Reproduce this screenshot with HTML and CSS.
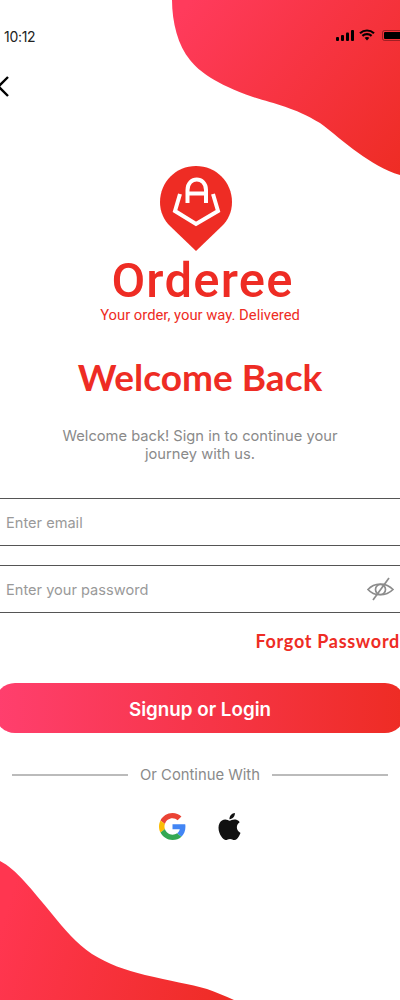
FILE: index.html
```html
<!DOCTYPE html>
<html lang="en">
<head>
    <title>Orderee - Welcome Back</title>
    <link rel="stylesheet" href="styles.css">
</head>
<body>
    <div id="screen">
        <!-- Background blobs -->
        <svg class="blob blob-top" width="228" height="176" viewBox="172 0 228 176">
            <defs>
                <linearGradient id="blobTop" gradientUnits="userSpaceOnUse" x1="190" y1="0" x2="400" y2="175">
                    <stop offset="0" stop-color="#FF3B5C"/>
                    <stop offset="1" stop-color="#EE2C24"/>
                </linearGradient>
            </defs>
            <path fill="url(#blobTop)" d="M172 0C172 22 178 46 190 60C200 72 214 83 253 97C275 104 293 107 320 123C345 142 370 166 400 175V0Z"/>
        </svg>
        <svg class="blob blob-bottom" width="234" height="140" viewBox="0 860 234 140">
            <defs>
                <linearGradient id="blobBottom" gradientUnits="userSpaceOnUse" x1="0" y1="930" x2="234" y2="1000">
                    <stop offset="0" stop-color="#FF3650"/>
                    <stop offset="1" stop-color="#EE2C24"/>
                </linearGradient>
            </defs>
            <path fill="url(#blobBottom)" d="M0 861C8 865 16 872 24 881C34 892 42 902 52 914C64 929 76 943 92 954C108 964 125 970 145 975C170 981 190 984 207 989C216 992 225 996 234 1000H0Z"/>
        </svg>

        <div class="status-bar">
            <span class="time">10:12</span>
            <div class="status-icons">
                <svg width="18" height="11" viewBox="0 0 18 11">
                    <rect x="0" y="7" width="3" height="4" rx="1"/>
                    <rect x="5" y="5" width="3" height="6" rx="1"/>
                    <rect x="10" y="2.500" width="3" height="8.500" rx="1"/>
                    <rect x="15" y="0" width="3" height="11" rx="1"/>
                </svg>
                <svg width="16" height="12" viewBox="0 0 16 12">
                    <path d="M1 4.200C5 .6 11 .6 15 4.200M3.400 6.800C6 4.600 10 4.600 12.600 6.800" fill="none" stroke="#000" stroke-width="2.200"/>
                    <path d="M5.600 8.800C7 7.700 9 7.700 10.400 8.800L8 11.600Z"/>
                </svg>
                <svg class="battery" width="18" height="11" viewBox="0 0 18 11">
                    <rect x=".5" y=".5" width="20" height="10" rx="2" fill="none" stroke="#000" stroke-opacity=".35"/>
                    <rect x="2" y="2" width="20" height="7" rx="1"/>
                </svg>
            </div>
        </div>

        <svg class="back" width="9" height="21" viewBox="0 0 9 21">
            <path d="M8 1L-1.500 10.500L8 20" fill="none" stroke="#000" stroke-width="2.400"/>
        </svg>

        <div class="logo">
            <svg width="72" height="85" viewBox="0 0 72 85">
                <path fill="#EE2C24" d="M36 0C56 0 72 16 72 36C72 46 68 54 62 60L36 85L10 60C4 54 0 46 0 36C0 16 16 0 36 0Z"/>
                <g fill="none" stroke="#fff" stroke-width="4">
                    <path d="M20 28L15 45L36 58L58 45L53 28"/>
                    <path d="M27.500 37V24C27.500 10 46 10 46 24V37M27.500 27.500H46"/>
                </g>
            </svg>
            <div class="brand">Orderee</div>
            <div class="tagline">Your order, your way. Delivered</div>
        </div>

        <h1>Welcome Back</h1>
        <p class="intro">Welcome back! Sign in to continue your journey with us.</p>

        <form>
            <div class="field">
                <input type="text" placeholder="Enter email">
            </div>
            <div class="field">
                <input type="password" placeholder="Enter your password">
                <!-- eye with slash -->
                <svg width="27" height="24" viewBox="0 0 27 24" fill="none" stroke="#8c8c8c" stroke-width="1.700">
                    <path d="M1 12.500C7 5.500 19 5 26 12.500C19 19.500 7 19.500 1 12.500Z"/>
                    <circle cx="13.500" cy="12.500" r="5"/>
                    <path d="M22 1L6 23"/>
                </svg>
            </div>
            <a class="forgot">Forgot Password</a>
            <button type="button">Signup or Login</button>
        </form>

        <div class="divider">
            <span class="line"></span>
            <span>Or Continue With</span>
            <span class="line"></span>
        </div>

        <div class="social">
            <svg width="27" height="27" viewBox="0 0 48 48">
                <path fill="#EA4335" d="M24 9.500c3.500 0 6.700 1.300 9.100 3.500l6.800-6.800C35.800 2.400 30.200 0 24 0 14.600 0 6.500 5.400 2.600 13.200l7.900 6.200C12.400 13.600 17.700 9.500 24 9.500z"/>
                <path fill="#4285F4" d="M47 24.500c0-1.600-.1-3.100-.4-4.500H24v9h12.900c-.6 3-2.200 5.500-4.800 7.200l7.700 6C44.300 38 47 31.800 47 24.500z"/>
                <path fill="#FBBC05" d="M10.500 28.600c-.5-1.400-.8-3-.8-4.600s.3-3.200.8-4.600l-7.900-6.200C.9 16.500 0 20.100 0 24s.9 7.500 2.600 10.800l7.900-6.200z"/>
                <path fill="#34A853" d="M24 48c6.500 0 11.900-2.100 15.800-5.800l-7.700-6c-2.100 1.400-4.900 2.300-8.100 2.300-6.300 0-11.600-4.100-13.500-9.900l-7.900 6.200C6.500 42.600 14.600 48 24 48z"/>
            </svg>
            <svg width="23" height="27" viewBox="2.500 0 19 24">
                <path fill="#111" d="M12.152 6.896c-.948 0-2.415-1.078-3.96-1.04-2.04.027-3.91 1.183-4.961 3.014-2.117 3.675-.546 9.103 1.519 12.09 1.013 1.454 2.208 3.09 3.792 3.039 1.52-.065 2.09-.987 3.935-.987 1.831 0 2.35.987 3.96.948 1.637-.026 2.676-1.48 3.676-2.948 1.156-1.688 1.636-3.325 1.662-3.415-.039-.013-3.182-1.221-3.22-4.857-.026-3.04 2.48-4.494 2.597-4.559-1.429-2.09-3.623-2.324-4.39-2.376-2-.156-3.675 1.09-4.61 1.09zM15.530 3.830c.843-1.012 1.400-2.427 1.245-3.830-1.207.052-2.662.805-3.532 1.818-.78.896-1.454 2.338-1.273 3.714 1.338.104 2.715-.688 3.559-1.701"/>
            </svg>
        </div>
    </div>
</body>
</html>
```

FILE: styles.css
```css
body {
    font-family: Inter, "Liberation Sans", sans-serif;
    background-color: #fff;
    margin: 0;
    padding: 0;
}

#screen {
    width: 400px;
    height: 1000px;
    position: relative;
    overflow: hidden;
    background-color: #fff;
}

.blob {
    position: absolute;
    display: block;
}

.blob-top {
    top: 0;
    right: 0;
}

.blob-bottom {
    bottom: 0;
    left: 0;
}

.status-bar {
    position: relative;
    display: flex;
    justify-content: space-between;
    align-items: center;
    height: 20px;
    padding: 26px 0 0 4px;
}

.time {
    font-size: 14px;
    color: #222;
    letter-spacing: -0.3px;
}

.status-icons {
    display: flex;
    align-items: center;
    gap: 5px;
    margin-bottom: 2px;
}

.battery {
    margin-left: 2px;
}

.back {
    display: block;
    margin-top: 30px;
    overflow: hidden;
}

.logo {
    display: flex;
    flex-direction: column;
    align-items: center;
    margin-top: 69px;
    color: #EE2C24;
}

.logo svg {
    display: block;
    margin-right: 8px;
}

.brand {
    font-family: Roboto, sans-serif;
    font-weight: 500;
    font-size: 49px;
    line-height: 50px;
    letter-spacing: 1.2px;
    margin: 5px 0 0 5px;
}

.tagline {
    font-family: Roboto, sans-serif;
    font-weight: 400;
    font-size: 14.8px;
    line-height: 16px;
    margin-top: 1px;
}

h1 {
    font-family: Lato, sans-serif;
    font-weight: 700;
    font-size: 37px;
    line-height: 44px;
    color: #EE2C24;
    text-align: center;
    margin: 32px 0 0;
}

.intro {
    width: 300px;
    margin: 28px auto 0;
    font-size: 14.7px;
    line-height: 18px;
    color: #8a8a8a;
    text-align: center;
}

form {
    margin-top: 35px;
}

.field {
    display: flex;
    align-items: center;
    box-sizing: border-box;
    height: 48px;
    margin-bottom: 19px;
    padding: 0 6px;
    border-top: 1px solid #555;
    border-bottom: 1px solid #555;
}

.field input {
    flex: 1;
    min-width: 0;
    padding: 2px 0 0;
    border: none;
    outline: none;
    background: none;
    font-family: inherit;
    font-size: 14.6px;
}

.field input::placeholder {
    color: #999;
}

.forgot {
    display: block;
    font-family: Lato, sans-serif;
    font-weight: 700;
    font-size: 18px;
    line-height: 22px;
    letter-spacing: 0.7px;
    color: #EE2C24;
    text-align: right;
    margin-top: -2px;
}

button {
    display: block;
    width: 410px;
    height: 50px;
    margin: 31px 0 0 -5px;
    padding: 2px 0 0;
    border: none;
    border-radius: 20px;
    background: linear-gradient(90deg, #FF3F6E, #EE2C24);
    color: #fff;
    font-family: inherit;
    font-weight: 600;
    font-size: 18.8px;
}

.divider {
    display: flex;
    align-items: center;
    gap: 12px;
    margin: 33px 12px 0;
    font-size: 14.8px;
    line-height: 18px;
    color: #8a8a8a;
}

.line {
    flex: 1;
    height: 2px;
    background-color: #bbb;
}

.social {
    display: flex;
    justify-content: center;
    gap: 32px;
    margin-top: 29px;
}
```
